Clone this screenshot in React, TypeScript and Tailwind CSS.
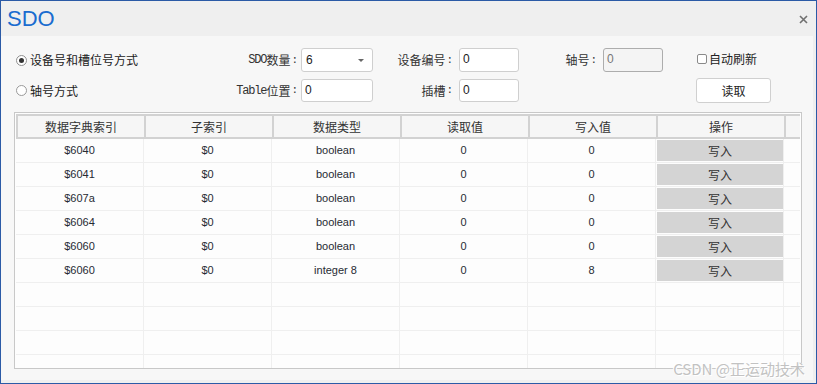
import React from "react";

const CJK = { fontFamily: '"Noto Sans CJK SC", "Liberation Sans", sans-serif' };
const DATA = { fontFamily: '"Liberation Sans", "Noto Sans CJK SC", sans-serif' };
const MONO = { fontFamily: '"Liberation Mono", "Noto Sans CJK SC", monospace' };

function Label({ latin, cjk, pr }: { latin?: string; cjk: string; pr: string }) {
  return (
    <div className={`flex items-center justify-end ${pr} text-[12px] text-[#333]`}>
      {latin && (
        <span style={MONO} className="text-[12px] tracking-[-1.2px]">
          {latin}
        </span>
      )}
      <span style={CJK} className="leading-none">{cjk}</span>
      <span style={MONO} className="text-[11px] ml-[1px]">:</span>
    </div>
  );
}

function Input({ value, disabled, h }: { value: string; disabled?: boolean; h: string }) {
  return (
    <div
      className={`${h} rounded-[3px] border ${
        disabled ? "border-[#adadad] bg-[#f4f4f4] text-[#777]" : "border-[#cfcfcf] bg-white text-[#222]"
      } pl-[3px] pt-[2px] text-[12px] leading-[16px]`}
      style={DATA}
    >
      {value}
    </div>
  );
}

const rows = [
  ["$6040", "$0", "boolean", "0", "0"],
  ["$6041", "$0", "boolean", "0", "0"],
  ["$607a", "$0", "boolean", "0", "0"],
  ["$6064", "$0", "boolean", "0", "0"],
  ["$6060", "$0", "boolean", "0", "0"],
  ["$6060", "$0", "integer 8", "0", "8"],
];

const headers = ["数据字典索引", "子索引", "数据类型", "读取值", "写入值", "操作"];

export default function App() {
  return (
    <div className="relative w-[817px] h-[384px] border border-[#2b5aa6] bg-[#efefef] flex flex-col overflow-hidden">
      {/* Title bar */}
      <div className="h-[35px] flex items-center justify-between pl-[6px] pr-[8px] shrink-0">
        <div className="text-[22px] leading-none text-[#1a6ccf]" style={{ fontFamily: '"Liberation Sans", sans-serif' }}>
          SDO
        </div>
        <svg width="9" height="9" viewBox="0 0 9 9" className="mt-[2px]">
          <path d="M1 1 L8 8 M8 1 L1 8" stroke="#707070" strokeWidth="1.6" />
        </svg>
      </div>

      {/* Content */}
      <div className="flex-1 mr-[3px] mb-[3px] bg-[#f7f7f7] flex flex-col">
        {/* Form */}
        <div className="grid grid-cols-[216px_69px_72px_86px_60px_84px_60px_33px_75px] grid-rows-[24px_25px] gap-y-[6px] pl-[15px] pt-[12px]">
          {/* row 1 */}
          <div className="flex items-center text-[12px] text-[#222]" style={CJK}>
            <span className="w-[11px] h-[11px] rounded-full border border-[#8f8f8f] bg-white flex items-center justify-center mr-[3px]">
              <span className="w-[5px] h-[5px] rounded-full bg-[#333]" />
            </span>
            <span className="leading-none">设备号和槽位号方式</span>
          </div>
          <Label latin="SDO" cjk="数量" pr="pr-[3px]" />
          <div
            className="relative h-[24px] rounded-[3px] border border-[#cfcfcf] bg-white pl-[4px] pt-[3px] text-[12px] leading-[16px] text-[#222]"
            style={DATA}
          >
            6
            <span className="absolute right-[8px] top-[10px] w-0 h-0 border-l-[3px] border-r-[3px] border-t-[3px] border-l-transparent border-r-transparent border-t-[#666]" />
          </div>
          <Label cjk="设备编号" pr="pr-[6px]" />
          <Input value="0" h="h-[24px]" />
          <Label cjk="轴号" pr="pr-[6px]" />
          <Input value="0" disabled h="h-[24px]" />
          <div />
          <div className="flex items-center text-[12px] text-[#222] pb-[2px]" style={CJK}>
            <span className="w-[10px] h-[10px] rounded-[2px] border border-[#8a8a8a] bg-white mr-[2px] ml-[1px]" />
            <span className="leading-none">自动刷新</span>
          </div>

          {/* row 2 */}
          <div className="flex items-center text-[12px] text-[#222]" style={CJK}>
            <span className="w-[11px] h-[11px] rounded-full border border-[#9a9a9a] bg-white mr-[3px]" />
            <span className="leading-none">轴号方式</span>
          </div>
          <Label latin="Table" cjk="位置" pr="pr-[3px]" />
          <div className="flex items-center">
            <div className="w-full">
              <Input value="0" h="h-[23px]" />
            </div>
          </div>
          <Label cjk="插槽" pr="pr-[6px]" />
          <div className="flex items-center">
            <div className="w-full">
              <Input value="0" h="h-[23px]" />
            </div>
          </div>
          <div />
          <div />
          <div />
          <div
            className="h-[25px] rounded-[3px] border border-[#d0d0d0] bg-white flex items-center justify-center text-[12px] text-[#222]"
            style={CJK}
          >
            <span className="leading-none">读取</span>
          </div>
        </div>

        {/* Table */}
        <div className="mt-[9px] ml-[13px] w-[788px] h-[257px] border border-[#c8c8c8] bg-[#fdfdfd] p-[1px] overflow-hidden">
          <div className="grid grid-cols-[128px_128px_128px_128px_128px_128px_1fr] h-[25px] border-t-2 border-b-2 border-l-2 border-[#d2d2d2] bg-[#f6f6f6]">
            {headers.map((h) => (
              <div
                key={h}
                className="border-r-2 border-[#d2d2d2] flex items-center justify-center text-[12px] text-[#333]"
                style={CJK}
              >
                <span className="leading-none">{h}</span>
              </div>
            ))}
            <div />
          </div>
          {Array.from({ length: 10 }).map((_, i) => {
            const r = rows[i];
            return (
              <div
                key={i}
                className="grid grid-cols-[128px_128px_128px_128px_128px_128px_1fr] h-[24px] border-b border-[#efefef]"
              >
                {[0, 1, 2, 3, 4].map((c) => (
                  <div
                    key={c}
                    className="border-r border-[#efefef] flex items-center justify-center text-[11px] text-[#262a33]"
                    style={DATA}
                  >
                    {r ? r[c] : ""}
                  </div>
                ))}
                <div className="border-r border-[#efefef] pl-[1px] py-[1px]">
                  {r && (
                    <div
                      className="h-full bg-[#d4d4d4] flex items-center justify-center text-[12px] text-[#333]"
                      style={CJK}
                    >
                      <span className="leading-none">写入</span>
                    </div>
                  )}
                </div>
                <div />
              </div>
            );
          })}
        </div>
      </div>

      {/* Watermark */}
      <div
        className="absolute right-[11px] bottom-[7px] text-[15px] leading-none text-[#c2c2c2]"
        style={{
          fontFamily: '"Noto Sans CJK SC", "Liberation Sans", sans-serif',
          textShadow: "0 0 1px #fff, 1px 1px 0 #fff, -1px -1px 0 #fff",
        }}
      >
        CSDN @正运动技术
      </div>
    </div>
  );
}
